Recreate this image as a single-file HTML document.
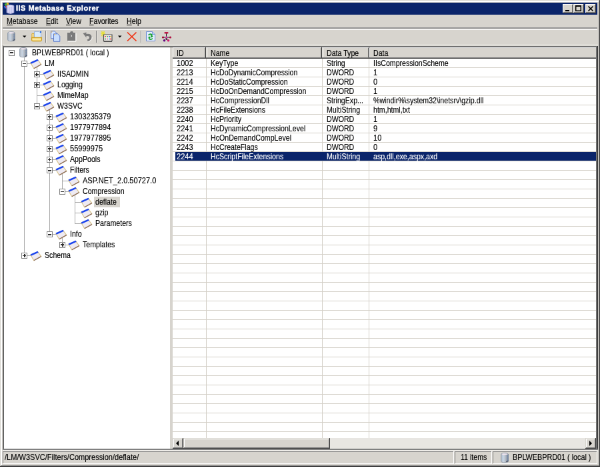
<!DOCTYPE html>
<html><head><meta charset="utf-8"><style>
html,body{margin:0;padding:0;width:600px;height:467px;overflow:hidden;background:#D4D0C8}
#w{position:absolute;left:0;top:0;width:900px;height:700px;transform:scale(0.666667);transform-origin:0 0;will-change:transform;overflow:hidden;font-family:'Liberation Sans', sans-serif}
u{text-decoration:underline}
</style></head><body><div id="w">
<div style="position:absolute;left:0px;top:0px;width:900px;height:700px;background:#D7D4CE;"></div>
<div style="position:absolute;left:0px;top:0px;width:900px;height:1px;background:#D7D4CE;"></div>
<div style="position:absolute;left:0px;top:0px;width:1px;height:700px;background:#D7D4CE;"></div>
<div style="position:absolute;left:1px;top:1px;width:898px;height:2px;background:#FFFFFF;"></div>
<div style="position:absolute;left:1px;top:1px;width:2px;height:698px;background:#FFFFFF;"></div>
<div style="position:absolute;left:0px;top:699px;width:900px;height:1px;background:#404040;"></div>
<div style="position:absolute;left:899px;top:0px;width:1px;height:700px;background:#404040;"></div>
<div style="position:absolute;left:1px;top:698px;width:898px;height:1px;background:#808080;"></div>
<div style="position:absolute;left:898px;top:1px;width:1px;height:698px;background:#808080;"></div>
<div style="position:absolute;left:4px;top:4px;width:892px;height:18px;background:#0A246A;"></div>
<div style="position:absolute;left:24px;top:6.01px;height:13px;line-height:13px;white-space:nowrap;font:bold 11px 'Liberation Sans', sans-serif;color:#FFF;letter-spacing:0.5px;-webkit-text-stroke:0.15px #FFF;transform:scaleX(1);transform-origin:0 0;-webkit-text-stroke:0.4px #FFF">IIS Metabase Explorer</div>
<svg style="position:absolute;left:5px;top:4px" width="18" height="18" viewBox="0 0 18 18">
<path d="M1.5 2 L4.5 0.5 L6 3.5 L3 5Z" fill="#40B040"/><path d="M4.5 0.5 L7.5 0 L8.5 3 L6 3.5Z" fill="#F0C020"/><path d="M1 5 L3 5 L4.5 8.5 L2 8.5Z" fill="#3070F0"/><path d="M3 5 L6 3.5 L7.5 7 L4.5 8.5Z" fill="#E03020"/>
<path d="M5 4.5 Q10.5 2 16 4.5 L16 15 Q10.5 18 5 15Z" fill="#C4C4EC" stroke="#9090C8" stroke-width="0.8"/>
<path d="M5.5 5 Q10.5 3 15.5 5 Q10.5 7 5.5 5Z" fill="#E8E8FF"/>
<path d="M8 6 L8 15.5 M11 6.5 L11 16.5 M14 6 L14 15.5" stroke="#E4E4FF" stroke-width="1"/>
</svg>
<div style="position:absolute;left:844px;top:6px;width:16px;height:14px;background:#D7D4CE;"></div>
<div style="position:absolute;left:844px;top:6px;width:15px;height:1px;background:#FFFFFF;"></div>
<div style="position:absolute;left:844px;top:6px;width:1px;height:13px;background:#FFFFFF;"></div>
<div style="position:absolute;left:844px;top:19px;width:16px;height:1px;background:#404040;"></div>
<div style="position:absolute;left:859px;top:6px;width:1px;height:14px;background:#404040;"></div>
<div style="position:absolute;left:845px;top:18px;width:14px;height:1px;background:#808080;"></div>
<div style="position:absolute;left:858px;top:7px;width:1px;height:12px;background:#808080;"></div>
<div style="position:absolute;left:848px;top:15px;width:6px;height:2px;background:#000;"></div>
<div style="position:absolute;left:860px;top:6px;width:16px;height:14px;background:#D7D4CE;"></div>
<div style="position:absolute;left:860px;top:6px;width:15px;height:1px;background:#FFFFFF;"></div>
<div style="position:absolute;left:860px;top:6px;width:1px;height:13px;background:#FFFFFF;"></div>
<div style="position:absolute;left:860px;top:19px;width:16px;height:1px;background:#404040;"></div>
<div style="position:absolute;left:875px;top:6px;width:1px;height:14px;background:#404040;"></div>
<div style="position:absolute;left:861px;top:18px;width:14px;height:1px;background:#808080;"></div>
<div style="position:absolute;left:874px;top:7px;width:1px;height:12px;background:#808080;"></div>
<svg style="position:absolute;left:860px;top:6px" width="16" height="14"><path d="M3.7 3 L11.3 3 L11.3 10.3 L3.7 10.3Z" fill="none" stroke="#000" stroke-width="1.5"/><rect x="3" y="2" width="9" height="2" fill="#000"/></svg>
<div style="position:absolute;left:878px;top:6px;width:16px;height:14px;background:#D7D4CE;"></div>
<div style="position:absolute;left:878px;top:6px;width:15px;height:1px;background:#FFFFFF;"></div>
<div style="position:absolute;left:878px;top:6px;width:1px;height:13px;background:#FFFFFF;"></div>
<div style="position:absolute;left:878px;top:19px;width:16px;height:1px;background:#404040;"></div>
<div style="position:absolute;left:893px;top:6px;width:1px;height:14px;background:#404040;"></div>
<div style="position:absolute;left:879px;top:18px;width:14px;height:1px;background:#808080;"></div>
<div style="position:absolute;left:892px;top:7px;width:1px;height:12px;background:#808080;"></div>
<svg style="position:absolute;left:878px;top:6px" width="16" height="14"><path d="M4.5 3.5 L11.5 10.5 M11.5 3.5 L4.5 10.5" stroke="#000" stroke-width="1.6"/></svg>
<div style="position:absolute;left:10px;top:25.18px;height:13px;line-height:13px;white-space:nowrap;font:normal 12px 'Liberation Sans', sans-serif;color:#000;letter-spacing:0px;-webkit-text-stroke:0.15px #000;transform:scaleX(0.885);transform-origin:0 0;"><u>M</u>etabase</div>
<div style="position:absolute;left:69px;top:25.18px;height:13px;line-height:13px;white-space:nowrap;font:normal 12px 'Liberation Sans', sans-serif;color:#000;letter-spacing:0px;-webkit-text-stroke:0.15px #000;transform:scaleX(0.885);transform-origin:0 0;"><u>E</u>dit</div>
<div style="position:absolute;left:99px;top:25.18px;height:13px;line-height:13px;white-space:nowrap;font:normal 12px 'Liberation Sans', sans-serif;color:#000;letter-spacing:0px;-webkit-text-stroke:0.15px #000;transform:scaleX(0.885);transform-origin:0 0;"><u>V</u>iew</div>
<div style="position:absolute;left:134px;top:25.18px;height:13px;line-height:13px;white-space:nowrap;font:normal 12px 'Liberation Sans', sans-serif;color:#000;letter-spacing:0px;-webkit-text-stroke:0.15px #000;transform:scaleX(0.885);transform-origin:0 0;"><u>F</u>avorites</div>
<div style="position:absolute;left:190px;top:25.18px;height:13px;line-height:13px;white-space:nowrap;font:normal 12px 'Liberation Sans', sans-serif;color:#000;letter-spacing:0px;-webkit-text-stroke:0.15px #000;transform:scaleX(0.885);transform-origin:0 0;"><u>H</u>elp</div>
<div style="position:absolute;left:4px;top:41.3px;width:892px;height:1.4px;background:#989898;"></div>
<div style="position:absolute;left:4px;top:44px;width:892px;height:1px;background:#FFFFFF;"></div>
<svg style="position:absolute;left:9px;top:46px" width="16" height="17" viewBox="0 0 16 17"><defs><linearGradient id="sg9_46" x1="0" x2="1"><stop offset="0" stop-color="#A8B0BA"/><stop offset="0.35" stop-color="#D4D8DE"/><stop offset="0.7" stop-color="#A8B0BA"/><stop offset="1" stop-color="#747E8E"/></linearGradient></defs>
<path d="M2.5 4 Q2.5 1.5 8 1.5 Q13.5 1.5 13.5 4 L13.5 13.5 Q13.5 15.8 8 15.8 Q2.5 15.8 2.5 13.5Z" fill="url(#sg9_46)" stroke="#8C98A8" stroke-width="0.8"/>
<path d="M3.5 3.6 Q4 2.2 8 2.2 Q12.5 2.2 12.8 3.6 Q8 5 3.5 3.6Z" fill="#F2E6F2"/>
<path d="M4.5 5 L4.5 14 M7 5.2 L7 14.8" stroke="#B4CCE6" stroke-width="0.8"/>
<path d="M12 5.5 L12 6.5 M12 8.5 L12 9.5 M12 11.5 L12 12.5" stroke="#4A7CC4" stroke-width="1"/>
<path d="M10 14.5 Q12.5 14.5 13.2 13" stroke="#505868" stroke-width="1.2" fill="none"/></svg>
<svg style="position:absolute;left:34px;top:53px" width="6" height="4" viewBox="0 0 6 4"><path d="M0 0.5 L5.5 0.5 L2.75 3.5Z" fill="#000"/></svg>
<svg style="position:absolute;left:46px;top:46px" width="18" height="17" viewBox="0 0 18 17"><path d="M2 6 Q1.5 4.5 3 4.5 L5 4.5 L5 11 L2 11Z" fill="#FFF4C8" stroke="#D8A828" stroke-width="1.2"/><path d="M5.5 1.5 L13 1.5 L15.5 4 L15.5 12 L5.5 12Z" fill="#D8ECFF" stroke="#88A8D8" stroke-width="0.8"/><circle cx="15" cy="2" r="1.2" fill="#2068E0"/><path d="M1.6 10.5 L16.4 10.5 L16.4 14 Q16.4 15.5 15 15.5 L3 15.5 Q1.6 15.5 1.6 14Z" fill="#FCE9A0" stroke="#D0A020" stroke-width="1.3"/></svg>
<div style="position:absolute;left:68px;top:46px;width:1px;height:18px;background:#808080;"></div>
<div style="position:absolute;left:69px;top:46px;width:1px;height:18px;background:#F0EEEA;"></div>
<svg style="position:absolute;left:75px;top:46px" width="17" height="17" viewBox="0 0 17 17"><path d="M1.5 0.8 L7 0.8 L9.8 3.6 L9.8 11.8 L1.5 11.8Z" fill="#D6E6FF" stroke="#5A78C8" stroke-width="1"/><path d="M1.8 1.2 L4 1.2 L1.8 3.5Z" fill="#F0C060"/><path d="M5.5 4.8 L11.5 4.8 L14.8 8 L14.8 16.3 L5.5 16.3Z" fill="#C8DEFF" stroke="#5A78C8" stroke-width="1"/><path d="M6 5.2 L8.5 5.2 L6 7.5Z" fill="#F0C060"/></svg>
<svg style="position:absolute;left:99px;top:46px" width="17" height="17" viewBox="0 0 17 17"><path d="M2 3 L6 3 L7 1 L10 1 L11 3 L14 3 L14 15 L2 15Z" fill="#7A7A7A"/><path d="M3 16 L15 16 L15 4" fill="none" stroke="#FFFFFF" stroke-width="1"/><path d="M7 6 L9 8 L7.5 9" fill="none" stroke="#F0F0F0" stroke-width="0.9"/></svg>
<svg style="position:absolute;left:123px;top:47px" width="17" height="16" viewBox="0 0 17 16"><path d="M1.5 3 L6.5 1.5 L6.5 4 Q14.5 3 14.5 9 Q14.5 13 9 15 L7.5 12.5 Q11 11.5 11 9 Q11 6.5 6.5 7 L6.5 9.5Z" fill="#7A7A7A"/><path d="M9.5 15.5 Q15.5 13 15.2 9" fill="none" stroke="#FFFFFF" stroke-width="0.9"/></svg>
<div style="position:absolute;left:144px;top:46px;width:1px;height:18px;background:#808080;"></div>
<div style="position:absolute;left:145px;top:46px;width:1px;height:18px;background:#F0EEEA;"></div>
<svg style="position:absolute;left:150px;top:46px" width="20" height="18" viewBox="0 0 20 18"><path d="M2 1 L7 8 M7 1 L2 8 M4.5 0 L4.5 9 M1 4.5 L8 4.5" stroke="#E8E040" stroke-width="1.3"/><path d="M5.5 6 L18 6 L18 15.5 L5.5 15.5Z" fill="#F4F2EC" stroke="#505050" stroke-width="1.2"/><path d="M5.5 16 L18 16" stroke="#404040" stroke-width="1.6"/><circle cx="8" cy="9" r="0.9" fill="#E02020"/><circle cx="11" cy="9" r="0.9" fill="#20A040"/><circle cx="14" cy="9" r="0.9" fill="#2040E0"/><circle cx="8" cy="12.5" r="0.9" fill="#20A040"/><circle cx="11" cy="12.5" r="0.9" fill="#E040A0"/><circle cx="14" cy="12.5" r="0.9" fill="#20B0E0"/><circle cx="16" cy="9" r="0.9" fill="#E0A020"/><circle cx="16" cy="12.5" r="0.9" fill="#E02020"/></svg>
<svg style="position:absolute;left:177px;top:53px" width="6" height="4" viewBox="0 0 6 4"><path d="M0 0.5 L5.5 0.5 L2.75 3.5Z" fill="#000"/></svg>
<svg style="position:absolute;left:189px;top:47px" width="17" height="16" viewBox="0 0 17 16"><path d="M2 1.5 L15.5 14.5 M15.5 1.5 L2 14.5" stroke="#F03010" stroke-width="1.7"/></svg>
<div style="position:absolute;left:211px;top:46px;width:1px;height:18px;background:#808080;"></div>
<div style="position:absolute;left:212px;top:46px;width:1px;height:18px;background:#F0EEEA;"></div>
<svg style="position:absolute;left:218px;top:46px" width="16" height="17" viewBox="0 0 16 17"><path d="M1.5 1.5 L10.5 1.5 L14.5 5.5 L14.5 15.5 L1.5 15.5Z" fill="#E4EEFF" stroke="#6A8AD0" stroke-width="1"/><path d="M10.5 1.5 L10.5 5.5 L14.5 5.5" fill="#B8D0F0" stroke="#6A8AD0" stroke-width="0.8"/><path d="M4 6 Q6 3.8 9 4.5 Q11.5 5.5 10.5 8 L12 8.5 L9 10.5 L7.5 7.5 L9 7.8 Q9 6.5 7.5 6.3 Q6 6.2 5.5 7.5Z" fill="#18A030"/><path d="M11.5 12 Q9.5 14.5 6.5 13.8 Q4 13 5 10.5 L3.5 10 L6.5 8.5 L8 11.2 L6.5 11 Q6.5 12.2 8 12.3 Q9.5 12.5 10 11Z" fill="#18A030"/></svg>
<svg style="position:absolute;left:241px;top:46px" width="18" height="18" viewBox="0 0 18 18"><path d="M8.5 4 L8.5 14 M3.5 10 L14.5 10 M8.5 11 L5.5 14.5 M8.5 11 L11.5 14.5" stroke="#202020" stroke-width="1" fill="none"/><rect x="5.5" y="2" width="6" height="2.6" rx="1" fill="#C01848"/><circle cx="3.5" cy="10" r="1.6" fill="#A00830"/><circle cx="14.5" cy="10" r="1.6" fill="#B01040"/><circle cx="8.5" cy="10" r="1.5" fill="#F030B0"/><circle cx="5.5" cy="14.8" r="1.8" fill="#600880"/><circle cx="11.5" cy="14.8" r="1.8" fill="#D01870"/></svg>
<div style="position:absolute;left:4px;top:68px;width:893px;height:607px;background:#D7D4CE;"></div>
<div style="position:absolute;left:6px;top:71px;width:249px;height:602px;background:#FFFFFF;"></div>
<div style="position:absolute;left:4px;top:67px;width:893px;height:1px;background:#F4F2EE;"></div>
<div style="position:absolute;left:4px;top:69px;width:893px;height:1px;background:#808080;"></div>
<div style="position:absolute;left:4px;top:70px;width:893px;height:1px;background:#404040;"></div>
<div style="position:absolute;left:4px;top:68px;width:1px;height:607px;background:#808080;"></div>
<div style="position:absolute;left:5px;top:69px;width:1px;height:605px;background:#5A5A5A;"></div>
<div style="position:absolute;left:894px;top:69px;width:1px;height:605px;background:#808080;"></div>
<div style="position:absolute;left:895px;top:69px;width:2px;height:606px;background:#404040;"></div>
<div style="position:absolute;left:4px;top:673px;width:893px;height:2px;background:#808080;"></div>
<div style="position:absolute;left:4px;top:675px;width:893px;height:2px;background:#EEECE8;"></div>
<div style="position:absolute;left:36px;top:79px;width:0;height:304px;border-left:1px solid #A8A8A8"></div>
<div style="position:absolute;left:55px;top:95px;width:0;height:64px;border-left:1px solid #A8A8A8"></div>
<div style="position:absolute;left:74px;top:159px;width:0;height:192px;border-left:1px solid #A8A8A8"></div>
<div style="position:absolute;left:93px;top:255px;width:0;height:32px;border-left:1px solid #A8A8A8"></div>
<div style="position:absolute;left:112px;top:287px;width:0;height:48px;border-left:1px solid #A8A8A8"></div>
<div style="position:absolute;left:93px;top:351px;width:0;height:16px;border-left:1px solid #A8A8A8"></div>
<div style="position:absolute;left:12.5px;top:75px;width:9px;height:9px;background:#FFFFFF;border:1px solid #808080;box-sizing:border-box"></div>
<div style="position:absolute;left:14.5px;top:78.0px;width:5px;height:1.5px;background:#303030;"></div>
<svg style="position:absolute;left:27px;top:70px" width="16" height="17" viewBox="0 0 16 17"><defs><linearGradient id="sg27_70" x1="0" x2="1"><stop offset="0" stop-color="#A8B0BA"/><stop offset="0.35" stop-color="#D4D8DE"/><stop offset="0.7" stop-color="#A8B0BA"/><stop offset="1" stop-color="#747E8E"/></linearGradient></defs>
<path d="M2.5 4 Q2.5 1.5 8 1.5 Q13.5 1.5 13.5 4 L13.5 13.5 Q13.5 15.8 8 15.8 Q2.5 15.8 2.5 13.5Z" fill="url(#sg27_70)" stroke="#8C98A8" stroke-width="0.8"/>
<path d="M3.5 3.6 Q4 2.2 8 2.2 Q12.5 2.2 12.8 3.6 Q8 5 3.5 3.6Z" fill="#F2E6F2"/>
<path d="M4.5 5 L4.5 14 M7 5.2 L7 14.8" stroke="#B4CCE6" stroke-width="0.8"/>
<path d="M12 5.5 L12 6.5 M12 8.5 L12 9.5 M12 11.5 L12 12.5" stroke="#4A7CC4" stroke-width="1"/>
<path d="M10 14.5 Q12.5 14.5 13.2 13" stroke="#505868" stroke-width="1.2" fill="none"/></svg>
<div style="position:absolute;left:48px;top:71.98px;height:13px;line-height:13px;white-space:nowrap;font:normal 12px 'Liberation Sans', sans-serif;color:#000;letter-spacing:0px;-webkit-text-stroke:0.15px #000;transform:scaleX(0.885);transform-origin:0 0;">BPLWEBPRD01 ( local )</div>
<div style="position:absolute;left:36px;top:95px;width:10px;height:0;border-top:1px solid #A8A8A8"></div>
<div style="position:absolute;left:31.5px;top:91px;width:9px;height:9px;background:#FFFFFF;border:1px solid #808080;box-sizing:border-box"></div>
<div style="position:absolute;left:33.5px;top:94.5px;width:5px;height:1.5px;background:#303030;"></div>
<svg style="position:absolute;left:45px;top:87px" width="18" height="17" viewBox="0 0 18 17"><path d="M0.8 7.2 L11.6 2.6 L16.8 9.6 L5.8 15.8Z" fill="#EEEAF2" stroke="#D8C488" stroke-width="1.1"/><path d="M5.8 15.8 L16.8 9.6" stroke="#8A6A58" stroke-width="1.3"/><path d="M0.6 6.6 L11.4 1.8 L12.8 3.8 L1.8 8.8Z" fill="#1A44EE"/></svg>
<div style="position:absolute;left:67px;top:87.98px;height:13px;line-height:13px;white-space:nowrap;font:normal 12px 'Liberation Sans', sans-serif;color:#000;letter-spacing:0px;-webkit-text-stroke:0.15px #000;transform:scaleX(0.885);transform-origin:0 0;">LM</div>
<div style="position:absolute;left:55px;top:111px;width:10px;height:0;border-top:1px solid #A8A8A8"></div>
<div style="position:absolute;left:50.5px;top:107px;width:9px;height:9px;background:#FFFFFF;border:1px solid #808080;box-sizing:border-box"></div>
<div style="position:absolute;left:52.5px;top:111.0px;width:5px;height:1.5px;background:#303030;"></div>
<div style="position:absolute;left:54.0px;top:108.5px;width:1.5px;height:5px;background:#303030;"></div>
<svg style="position:absolute;left:64px;top:103px" width="18" height="17" viewBox="0 0 18 17"><path d="M0.8 7.2 L11.6 2.6 L16.8 9.6 L5.8 15.8Z" fill="#EEEAF2" stroke="#D8C488" stroke-width="1.1"/><path d="M5.8 15.8 L16.8 9.6" stroke="#8A6A58" stroke-width="1.3"/><path d="M0.6 6.6 L11.4 1.8 L12.8 3.8 L1.8 8.8Z" fill="#1A44EE"/></svg>
<div style="position:absolute;left:86px;top:103.98px;height:13px;line-height:13px;white-space:nowrap;font:normal 12px 'Liberation Sans', sans-serif;color:#000;letter-spacing:0px;-webkit-text-stroke:0.15px #000;transform:scaleX(0.885);transform-origin:0 0;">IISADMIN</div>
<div style="position:absolute;left:55px;top:127px;width:10px;height:0;border-top:1px solid #A8A8A8"></div>
<div style="position:absolute;left:50.5px;top:123px;width:9px;height:9px;background:#FFFFFF;border:1px solid #808080;box-sizing:border-box"></div>
<div style="position:absolute;left:52.5px;top:126.0px;width:5px;height:1.5px;background:#303030;"></div>
<div style="position:absolute;left:54.0px;top:124.5px;width:1.5px;height:5px;background:#303030;"></div>
<svg style="position:absolute;left:64px;top:119px" width="18" height="17" viewBox="0 0 18 17"><path d="M0.8 7.2 L11.6 2.6 L16.8 9.6 L5.8 15.8Z" fill="#EEEAF2" stroke="#D8C488" stroke-width="1.1"/><path d="M5.8 15.8 L16.8 9.6" stroke="#8A6A58" stroke-width="1.3"/><path d="M0.6 6.6 L11.4 1.8 L12.8 3.8 L1.8 8.8Z" fill="#1A44EE"/></svg>
<div style="position:absolute;left:86px;top:119.98px;height:13px;line-height:13px;white-space:nowrap;font:normal 12px 'Liberation Sans', sans-serif;color:#000;letter-spacing:0px;-webkit-text-stroke:0.15px #000;transform:scaleX(0.885);transform-origin:0 0;">Logging</div>
<div style="position:absolute;left:55px;top:143px;width:10px;height:0;border-top:1px solid #A8A8A8"></div>
<svg style="position:absolute;left:64px;top:135px" width="18" height="17" viewBox="0 0 18 17"><path d="M0.8 7.2 L11.6 2.6 L16.8 9.6 L5.8 15.8Z" fill="#EEEAF2" stroke="#D8C488" stroke-width="1.1"/><path d="M5.8 15.8 L16.8 9.6" stroke="#8A6A58" stroke-width="1.3"/><path d="M0.6 6.6 L11.4 1.8 L12.8 3.8 L1.8 8.8Z" fill="#1A44EE"/></svg>
<div style="position:absolute;left:86px;top:135.98px;height:13px;line-height:13px;white-space:nowrap;font:normal 12px 'Liberation Sans', sans-serif;color:#000;letter-spacing:0px;-webkit-text-stroke:0.15px #000;transform:scaleX(0.885);transform-origin:0 0;">MimeMap</div>
<div style="position:absolute;left:55px;top:159px;width:10px;height:0;border-top:1px solid #A8A8A8"></div>
<div style="position:absolute;left:50.5px;top:155px;width:9px;height:9px;background:#FFFFFF;border:1px solid #808080;box-sizing:border-box"></div>
<div style="position:absolute;left:52.5px;top:159.0px;width:5px;height:1.5px;background:#303030;"></div>
<svg style="position:absolute;left:64px;top:151px" width="18" height="17" viewBox="0 0 18 17"><path d="M0.8 7.2 L11.6 2.6 L16.8 9.6 L5.8 15.8Z" fill="#EEEAF2" stroke="#D8C488" stroke-width="1.1"/><path d="M5.8 15.8 L16.8 9.6" stroke="#8A6A58" stroke-width="1.3"/><path d="M0.6 6.6 L11.4 1.8 L12.8 3.8 L1.8 8.8Z" fill="#1A44EE"/></svg>
<div style="position:absolute;left:86px;top:151.98px;height:13px;line-height:13px;white-space:nowrap;font:normal 12px 'Liberation Sans', sans-serif;color:#000;letter-spacing:0px;-webkit-text-stroke:0.15px #000;transform:scaleX(0.885);transform-origin:0 0;">W3SVC</div>
<div style="position:absolute;left:74px;top:175px;width:10px;height:0;border-top:1px solid #A8A8A8"></div>
<div style="position:absolute;left:69.5px;top:171px;width:9px;height:9px;background:#FFFFFF;border:1px solid #808080;box-sizing:border-box"></div>
<div style="position:absolute;left:71.5px;top:174.0px;width:5px;height:1.5px;background:#303030;"></div>
<div style="position:absolute;left:73.5px;top:172.5px;width:1.5px;height:5px;background:#303030;"></div>
<svg style="position:absolute;left:83px;top:167px" width="18" height="17" viewBox="0 0 18 17"><path d="M0.8 7.2 L11.6 2.6 L16.8 9.6 L5.8 15.8Z" fill="#EEEAF2" stroke="#D8C488" stroke-width="1.1"/><path d="M5.8 15.8 L16.8 9.6" stroke="#8A6A58" stroke-width="1.3"/><path d="M0.6 6.6 L11.4 1.8 L12.8 3.8 L1.8 8.8Z" fill="#1A44EE"/></svg>
<div style="position:absolute;left:105px;top:167.98px;height:13px;line-height:13px;white-space:nowrap;font:normal 12px 'Liberation Sans', sans-serif;color:#000;letter-spacing:0px;-webkit-text-stroke:0.15px #000;transform:scaleX(0.92);transform-origin:0 0;">1303235379</div>
<div style="position:absolute;left:74px;top:191px;width:10px;height:0;border-top:1px solid #A8A8A8"></div>
<div style="position:absolute;left:69.5px;top:187px;width:9px;height:9px;background:#FFFFFF;border:1px solid #808080;box-sizing:border-box"></div>
<div style="position:absolute;left:71.5px;top:190.5px;width:5px;height:1.5px;background:#303030;"></div>
<div style="position:absolute;left:73.5px;top:188.5px;width:1.5px;height:5px;background:#303030;"></div>
<svg style="position:absolute;left:83px;top:183px" width="18" height="17" viewBox="0 0 18 17"><path d="M0.8 7.2 L11.6 2.6 L16.8 9.6 L5.8 15.8Z" fill="#EEEAF2" stroke="#D8C488" stroke-width="1.1"/><path d="M5.8 15.8 L16.8 9.6" stroke="#8A6A58" stroke-width="1.3"/><path d="M0.6 6.6 L11.4 1.8 L12.8 3.8 L1.8 8.8Z" fill="#1A44EE"/></svg>
<div style="position:absolute;left:105px;top:183.98px;height:13px;line-height:13px;white-space:nowrap;font:normal 12px 'Liberation Sans', sans-serif;color:#000;letter-spacing:0px;-webkit-text-stroke:0.15px #000;transform:scaleX(0.92);transform-origin:0 0;">1977977894</div>
<div style="position:absolute;left:74px;top:207px;width:10px;height:0;border-top:1px solid #A8A8A8"></div>
<div style="position:absolute;left:69.5px;top:203px;width:9px;height:9px;background:#FFFFFF;border:1px solid #808080;box-sizing:border-box"></div>
<div style="position:absolute;left:71.5px;top:207.0px;width:5px;height:1.5px;background:#303030;"></div>
<div style="position:absolute;left:73.5px;top:204.5px;width:1.5px;height:5px;background:#303030;"></div>
<svg style="position:absolute;left:83px;top:199px" width="18" height="17" viewBox="0 0 18 17"><path d="M0.8 7.2 L11.6 2.6 L16.8 9.6 L5.8 15.8Z" fill="#EEEAF2" stroke="#D8C488" stroke-width="1.1"/><path d="M5.8 15.8 L16.8 9.6" stroke="#8A6A58" stroke-width="1.3"/><path d="M0.6 6.6 L11.4 1.8 L12.8 3.8 L1.8 8.8Z" fill="#1A44EE"/></svg>
<div style="position:absolute;left:105px;top:199.98px;height:13px;line-height:13px;white-space:nowrap;font:normal 12px 'Liberation Sans', sans-serif;color:#000;letter-spacing:0px;-webkit-text-stroke:0.15px #000;transform:scaleX(0.92);transform-origin:0 0;">1977977895</div>
<div style="position:absolute;left:74px;top:223px;width:10px;height:0;border-top:1px solid #A8A8A8"></div>
<div style="position:absolute;left:69.5px;top:219px;width:9px;height:9px;background:#FFFFFF;border:1px solid #808080;box-sizing:border-box"></div>
<div style="position:absolute;left:71.5px;top:222.0px;width:5px;height:1.5px;background:#303030;"></div>
<div style="position:absolute;left:73.5px;top:220.5px;width:1.5px;height:5px;background:#303030;"></div>
<svg style="position:absolute;left:83px;top:215px" width="18" height="17" viewBox="0 0 18 17"><path d="M0.8 7.2 L11.6 2.6 L16.8 9.6 L5.8 15.8Z" fill="#EEEAF2" stroke="#D8C488" stroke-width="1.1"/><path d="M5.8 15.8 L16.8 9.6" stroke="#8A6A58" stroke-width="1.3"/><path d="M0.6 6.6 L11.4 1.8 L12.8 3.8 L1.8 8.8Z" fill="#1A44EE"/></svg>
<div style="position:absolute;left:105px;top:215.98px;height:13px;line-height:13px;white-space:nowrap;font:normal 12px 'Liberation Sans', sans-serif;color:#000;letter-spacing:0px;-webkit-text-stroke:0.15px #000;transform:scaleX(0.92);transform-origin:0 0;">55999975</div>
<div style="position:absolute;left:74px;top:239px;width:10px;height:0;border-top:1px solid #A8A8A8"></div>
<div style="position:absolute;left:69.5px;top:235px;width:9px;height:9px;background:#FFFFFF;border:1px solid #808080;box-sizing:border-box"></div>
<div style="position:absolute;left:71.5px;top:238.5px;width:5px;height:1.5px;background:#303030;"></div>
<div style="position:absolute;left:73.5px;top:236.5px;width:1.5px;height:5px;background:#303030;"></div>
<svg style="position:absolute;left:83px;top:231px" width="18" height="17" viewBox="0 0 18 17"><path d="M0.8 7.2 L11.6 2.6 L16.8 9.6 L5.8 15.8Z" fill="#EEEAF2" stroke="#D8C488" stroke-width="1.1"/><path d="M5.8 15.8 L16.8 9.6" stroke="#8A6A58" stroke-width="1.3"/><path d="M0.6 6.6 L11.4 1.8 L12.8 3.8 L1.8 8.8Z" fill="#1A44EE"/></svg>
<div style="position:absolute;left:105px;top:231.98px;height:13px;line-height:13px;white-space:nowrap;font:normal 12px 'Liberation Sans', sans-serif;color:#000;letter-spacing:0px;-webkit-text-stroke:0.15px #000;transform:scaleX(0.885);transform-origin:0 0;">AppPools</div>
<div style="position:absolute;left:74px;top:255px;width:10px;height:0;border-top:1px solid #A8A8A8"></div>
<div style="position:absolute;left:69.5px;top:251px;width:9px;height:9px;background:#FFFFFF;border:1px solid #808080;box-sizing:border-box"></div>
<div style="position:absolute;left:71.5px;top:255.0px;width:5px;height:1.5px;background:#303030;"></div>
<svg style="position:absolute;left:83px;top:247px" width="18" height="17" viewBox="0 0 18 17"><path d="M0.8 7.2 L11.6 2.6 L16.8 9.6 L5.8 15.8Z" fill="#EEEAF2" stroke="#D8C488" stroke-width="1.1"/><path d="M5.8 15.8 L16.8 9.6" stroke="#8A6A58" stroke-width="1.3"/><path d="M0.6 6.6 L11.4 1.8 L12.8 3.8 L1.8 8.8Z" fill="#1A44EE"/></svg>
<div style="position:absolute;left:105px;top:247.98px;height:13px;line-height:13px;white-space:nowrap;font:normal 12px 'Liberation Sans', sans-serif;color:#000;letter-spacing:0px;-webkit-text-stroke:0.15px #000;transform:scaleX(0.885);transform-origin:0 0;">Filters</div>
<div style="position:absolute;left:93px;top:271px;width:10px;height:0;border-top:1px solid #A8A8A8"></div>
<svg style="position:absolute;left:102px;top:263px" width="18" height="17" viewBox="0 0 18 17"><path d="M0.8 7.2 L11.6 2.6 L16.8 9.6 L5.8 15.8Z" fill="#EEEAF2" stroke="#D8C488" stroke-width="1.1"/><path d="M5.8 15.8 L16.8 9.6" stroke="#8A6A58" stroke-width="1.3"/><path d="M0.6 6.6 L11.4 1.8 L12.8 3.8 L1.8 8.8Z" fill="#1A44EE"/></svg>
<div style="position:absolute;left:124px;top:263.98px;height:13px;line-height:13px;white-space:nowrap;font:normal 12px 'Liberation Sans', sans-serif;color:#000;letter-spacing:0px;-webkit-text-stroke:0.15px #000;transform:scaleX(0.92);transform-origin:0 0;">ASP.NET_2.0.50727.0</div>
<div style="position:absolute;left:93px;top:287px;width:10px;height:0;border-top:1px solid #A8A8A8"></div>
<div style="position:absolute;left:88.5px;top:283px;width:9px;height:9px;background:#FFFFFF;border:1px solid #808080;box-sizing:border-box"></div>
<div style="position:absolute;left:90.5px;top:286.5px;width:5px;height:1.5px;background:#303030;"></div>
<svg style="position:absolute;left:102px;top:279px" width="18" height="17" viewBox="0 0 18 17"><path d="M0.8 7.2 L11.6 2.6 L16.8 9.6 L5.8 15.8Z" fill="#EEEAF2" stroke="#D8C488" stroke-width="1.1"/><path d="M5.8 15.8 L16.8 9.6" stroke="#8A6A58" stroke-width="1.3"/><path d="M0.6 6.6 L11.4 1.8 L12.8 3.8 L1.8 8.8Z" fill="#1A44EE"/></svg>
<div style="position:absolute;left:124px;top:279.98px;height:13px;line-height:13px;white-space:nowrap;font:normal 12px 'Liberation Sans', sans-serif;color:#000;letter-spacing:0px;-webkit-text-stroke:0.15px #000;transform:scaleX(0.885);transform-origin:0 0;">Compression</div>
<div style="position:absolute;left:112px;top:303px;width:10px;height:0;border-top:1px solid #A8A8A8"></div>
<svg style="position:absolute;left:121px;top:295px" width="18" height="17" viewBox="0 0 18 17"><path d="M0.8 7.2 L11.6 2.6 L16.8 9.6 L5.8 15.8Z" fill="#EEEAF2" stroke="#D8C488" stroke-width="1.1"/><path d="M5.8 15.8 L16.8 9.6" stroke="#8A6A58" stroke-width="1.3"/><path d="M0.6 6.6 L11.4 1.8 L12.8 3.8 L1.8 8.8Z" fill="#1A44EE"/></svg>
<div style="position:absolute;left:141px;top:295px;width:39px;height:16px;background:#D7D4CE;"></div>
<div style="position:absolute;left:143px;top:295.98px;height:13px;line-height:13px;white-space:nowrap;font:normal 12px 'Liberation Sans', sans-serif;color:#000;letter-spacing:0px;-webkit-text-stroke:0.15px #000;transform:scaleX(0.885);transform-origin:0 0;">deflate</div>
<div style="position:absolute;left:112px;top:319px;width:10px;height:0;border-top:1px solid #A8A8A8"></div>
<svg style="position:absolute;left:121px;top:311px" width="18" height="17" viewBox="0 0 18 17"><path d="M0.8 7.2 L11.6 2.6 L16.8 9.6 L5.8 15.8Z" fill="#EEEAF2" stroke="#D8C488" stroke-width="1.1"/><path d="M5.8 15.8 L16.8 9.6" stroke="#8A6A58" stroke-width="1.3"/><path d="M0.6 6.6 L11.4 1.8 L12.8 3.8 L1.8 8.8Z" fill="#1A44EE"/></svg>
<div style="position:absolute;left:143px;top:311.98px;height:13px;line-height:13px;white-space:nowrap;font:normal 12px 'Liberation Sans', sans-serif;color:#000;letter-spacing:0px;-webkit-text-stroke:0.15px #000;transform:scaleX(0.885);transform-origin:0 0;">gzip</div>
<div style="position:absolute;left:112px;top:335px;width:10px;height:0;border-top:1px solid #A8A8A8"></div>
<svg style="position:absolute;left:121px;top:327px" width="18" height="17" viewBox="0 0 18 17"><path d="M0.8 7.2 L11.6 2.6 L16.8 9.6 L5.8 15.8Z" fill="#EEEAF2" stroke="#D8C488" stroke-width="1.1"/><path d="M5.8 15.8 L16.8 9.6" stroke="#8A6A58" stroke-width="1.3"/><path d="M0.6 6.6 L11.4 1.8 L12.8 3.8 L1.8 8.8Z" fill="#1A44EE"/></svg>
<div style="position:absolute;left:143px;top:327.98px;height:13px;line-height:13px;white-space:nowrap;font:normal 12px 'Liberation Sans', sans-serif;color:#000;letter-spacing:0px;-webkit-text-stroke:0.15px #000;transform:scaleX(0.885);transform-origin:0 0;">Parameters</div>
<div style="position:absolute;left:74px;top:351px;width:10px;height:0;border-top:1px solid #A8A8A8"></div>
<div style="position:absolute;left:69.5px;top:347px;width:9px;height:9px;background:#FFFFFF;border:1px solid #808080;box-sizing:border-box"></div>
<div style="position:absolute;left:71.5px;top:351.0px;width:5px;height:1.5px;background:#303030;"></div>
<svg style="position:absolute;left:83px;top:343px" width="18" height="17" viewBox="0 0 18 17"><path d="M0.8 7.2 L11.6 2.6 L16.8 9.6 L5.8 15.8Z" fill="#EEEAF2" stroke="#D8C488" stroke-width="1.1"/><path d="M5.8 15.8 L16.8 9.6" stroke="#8A6A58" stroke-width="1.3"/><path d="M0.6 6.6 L11.4 1.8 L12.8 3.8 L1.8 8.8Z" fill="#1A44EE"/></svg>
<div style="position:absolute;left:105px;top:343.98px;height:13px;line-height:13px;white-space:nowrap;font:normal 12px 'Liberation Sans', sans-serif;color:#000;letter-spacing:0px;-webkit-text-stroke:0.15px #000;transform:scaleX(0.885);transform-origin:0 0;">Info</div>
<div style="position:absolute;left:93px;top:367px;width:10px;height:0;border-top:1px solid #A8A8A8"></div>
<div style="position:absolute;left:88.5px;top:363px;width:9px;height:9px;background:#FFFFFF;border:1px solid #808080;box-sizing:border-box"></div>
<div style="position:absolute;left:90.5px;top:366.0px;width:5px;height:1.5px;background:#303030;"></div>
<div style="position:absolute;left:93.0px;top:364.5px;width:1.5px;height:5px;background:#303030;"></div>
<svg style="position:absolute;left:102px;top:359px" width="18" height="17" viewBox="0 0 18 17"><path d="M0.8 7.2 L11.6 2.6 L16.8 9.6 L5.8 15.8Z" fill="#EEEAF2" stroke="#D8C488" stroke-width="1.1"/><path d="M5.8 15.8 L16.8 9.6" stroke="#8A6A58" stroke-width="1.3"/><path d="M0.6 6.6 L11.4 1.8 L12.8 3.8 L1.8 8.8Z" fill="#1A44EE"/></svg>
<div style="position:absolute;left:124px;top:359.98px;height:13px;line-height:13px;white-space:nowrap;font:normal 12px 'Liberation Sans', sans-serif;color:#000;letter-spacing:0px;-webkit-text-stroke:0.15px #000;transform:scaleX(0.885);transform-origin:0 0;">Templates</div>
<div style="position:absolute;left:36px;top:383px;width:10px;height:0;border-top:1px solid #A8A8A8"></div>
<div style="position:absolute;left:31.5px;top:379px;width:9px;height:9px;background:#FFFFFF;border:1px solid #808080;box-sizing:border-box"></div>
<div style="position:absolute;left:33.5px;top:382.5px;width:5px;height:1.5px;background:#303030;"></div>
<div style="position:absolute;left:36.0px;top:380.5px;width:1.5px;height:5px;background:#303030;"></div>
<svg style="position:absolute;left:45px;top:375px" width="18" height="17" viewBox="0 0 18 17"><path d="M0.8 7.2 L11.6 2.6 L16.8 9.6 L5.8 15.8Z" fill="#EEEAF2" stroke="#D8C488" stroke-width="1.1"/><path d="M5.8 15.8 L16.8 9.6" stroke="#8A6A58" stroke-width="1.3"/><path d="M0.6 6.6 L11.4 1.8 L12.8 3.8 L1.8 8.8Z" fill="#1A44EE"/></svg>
<div style="position:absolute;left:67px;top:375.98px;height:13px;line-height:13px;white-space:nowrap;font:normal 12px 'Liberation Sans', sans-serif;color:#000;letter-spacing:0px;-webkit-text-stroke:0.15px #000;transform:scaleX(0.885);transform-origin:0 0;">Schema</div>
<div style="position:absolute;left:259px;top:71px;width:635px;height:602px;background:#FFFFFF;"></div>
<div style="position:absolute;left:259px;top:101px;width:635px;height:1px;background:#D4D0C8;"></div>
<div style="position:absolute;left:259px;top:115px;width:635px;height:1px;background:#D4D0C8;"></div>
<div style="position:absolute;left:259px;top:129px;width:635px;height:1px;background:#D4D0C8;"></div>
<div style="position:absolute;left:259px;top:143px;width:635px;height:1px;background:#D4D0C8;"></div>
<div style="position:absolute;left:259px;top:157px;width:635px;height:1px;background:#D4D0C8;"></div>
<div style="position:absolute;left:259px;top:171px;width:635px;height:1px;background:#D4D0C8;"></div>
<div style="position:absolute;left:259px;top:185px;width:635px;height:1px;background:#D4D0C8;"></div>
<div style="position:absolute;left:259px;top:199px;width:635px;height:1px;background:#D4D0C8;"></div>
<div style="position:absolute;left:259px;top:213px;width:635px;height:1px;background:#D4D0C8;"></div>
<div style="position:absolute;left:259px;top:227px;width:635px;height:1px;background:#D4D0C8;"></div>
<div style="position:absolute;left:259px;top:241px;width:635px;height:1px;background:#D4D0C8;"></div>
<div style="position:absolute;left:259px;top:255px;width:635px;height:1px;background:#D4D0C8;"></div>
<div style="position:absolute;left:259px;top:269px;width:635px;height:1px;background:#D4D0C8;"></div>
<div style="position:absolute;left:259px;top:283px;width:635px;height:1px;background:#D4D0C8;"></div>
<div style="position:absolute;left:259px;top:297px;width:635px;height:1px;background:#D4D0C8;"></div>
<div style="position:absolute;left:259px;top:311px;width:635px;height:1px;background:#D4D0C8;"></div>
<div style="position:absolute;left:259px;top:325px;width:635px;height:1px;background:#D4D0C8;"></div>
<div style="position:absolute;left:259px;top:339px;width:635px;height:1px;background:#D4D0C8;"></div>
<div style="position:absolute;left:259px;top:353px;width:635px;height:1px;background:#D4D0C8;"></div>
<div style="position:absolute;left:259px;top:367px;width:635px;height:1px;background:#D4D0C8;"></div>
<div style="position:absolute;left:259px;top:381px;width:635px;height:1px;background:#D4D0C8;"></div>
<div style="position:absolute;left:259px;top:395px;width:635px;height:1px;background:#D4D0C8;"></div>
<div style="position:absolute;left:259px;top:409px;width:635px;height:1px;background:#D4D0C8;"></div>
<div style="position:absolute;left:259px;top:423px;width:635px;height:1px;background:#D4D0C8;"></div>
<div style="position:absolute;left:259px;top:437px;width:635px;height:1px;background:#D4D0C8;"></div>
<div style="position:absolute;left:259px;top:451px;width:635px;height:1px;background:#D4D0C8;"></div>
<div style="position:absolute;left:259px;top:465px;width:635px;height:1px;background:#D4D0C8;"></div>
<div style="position:absolute;left:259px;top:479px;width:635px;height:1px;background:#D4D0C8;"></div>
<div style="position:absolute;left:259px;top:493px;width:635px;height:1px;background:#D4D0C8;"></div>
<div style="position:absolute;left:259px;top:507px;width:635px;height:1px;background:#D4D0C8;"></div>
<div style="position:absolute;left:259px;top:521px;width:635px;height:1px;background:#D4D0C8;"></div>
<div style="position:absolute;left:259px;top:535px;width:635px;height:1px;background:#D4D0C8;"></div>
<div style="position:absolute;left:259px;top:549px;width:635px;height:1px;background:#D4D0C8;"></div>
<div style="position:absolute;left:259px;top:563px;width:635px;height:1px;background:#D4D0C8;"></div>
<div style="position:absolute;left:259px;top:577px;width:635px;height:1px;background:#D4D0C8;"></div>
<div style="position:absolute;left:259px;top:591px;width:635px;height:1px;background:#D4D0C8;"></div>
<div style="position:absolute;left:259px;top:605px;width:635px;height:1px;background:#D4D0C8;"></div>
<div style="position:absolute;left:259px;top:619px;width:635px;height:1px;background:#D4D0C8;"></div>
<div style="position:absolute;left:259px;top:633px;width:635px;height:1px;background:#D4D0C8;"></div>
<div style="position:absolute;left:259px;top:647px;width:635px;height:1px;background:#D4D0C8;"></div>
<div style="position:absolute;left:309px;top:88px;width:1px;height:569px;background:#D4D0C8;"></div>
<div style="position:absolute;left:483px;top:88px;width:1px;height:569px;background:#D4D0C8;"></div>
<div style="position:absolute;left:553px;top:88px;width:1px;height:569px;background:#D4D0C8;"></div>
<div style="position:absolute;left:259px;top:71px;width:51px;height:17px;background:#D7D4CE;"></div>
<div style="position:absolute;left:259px;top:71px;width:51px;height:1px;background:#FFFFFF;"></div>
<div style="position:absolute;left:259px;top:71px;width:1px;height:17px;background:#FFFFFF;"></div>
<div style="position:absolute;left:259px;top:87px;width:51px;height:1px;background:#404040;"></div>
<div style="position:absolute;left:259px;top:86px;width:51px;height:1px;background:#808080;"></div>
<div style="position:absolute;left:308px;top:71px;width:1px;height:17px;background:#404040;"></div>
<div style="position:absolute;left:307px;top:72px;width:1px;height:15px;background:#808080;"></div>
<div style="position:absolute;left:264.6px;top:73.18px;height:13px;line-height:13px;white-space:nowrap;font:normal 12px 'Liberation Sans', sans-serif;color:#000;letter-spacing:0px;-webkit-text-stroke:0.15px #000;transform:scaleX(0.885);transform-origin:0 0;">ID</div>
<div style="position:absolute;left:310px;top:71px;width:174px;height:17px;background:#D7D4CE;"></div>
<div style="position:absolute;left:310px;top:71px;width:174px;height:1px;background:#FFFFFF;"></div>
<div style="position:absolute;left:310px;top:71px;width:1px;height:17px;background:#FFFFFF;"></div>
<div style="position:absolute;left:310px;top:87px;width:174px;height:1px;background:#404040;"></div>
<div style="position:absolute;left:310px;top:86px;width:174px;height:1px;background:#808080;"></div>
<div style="position:absolute;left:482px;top:71px;width:1px;height:17px;background:#404040;"></div>
<div style="position:absolute;left:481px;top:72px;width:1px;height:15px;background:#808080;"></div>
<div style="position:absolute;left:315.6px;top:73.18px;height:13px;line-height:13px;white-space:nowrap;font:normal 12px 'Liberation Sans', sans-serif;color:#000;letter-spacing:0px;-webkit-text-stroke:0.15px #000;transform:scaleX(0.885);transform-origin:0 0;">Name</div>
<div style="position:absolute;left:484px;top:71px;width:70px;height:17px;background:#D7D4CE;"></div>
<div style="position:absolute;left:484px;top:71px;width:70px;height:1px;background:#FFFFFF;"></div>
<div style="position:absolute;left:484px;top:71px;width:1px;height:17px;background:#FFFFFF;"></div>
<div style="position:absolute;left:484px;top:87px;width:70px;height:1px;background:#404040;"></div>
<div style="position:absolute;left:484px;top:86px;width:70px;height:1px;background:#808080;"></div>
<div style="position:absolute;left:553px;top:71px;width:1px;height:17px;background:#404040;"></div>
<div style="position:absolute;left:552px;top:72px;width:1px;height:15px;background:#808080;"></div>
<div style="position:absolute;left:489.6px;top:73.18px;height:13px;line-height:13px;white-space:nowrap;font:normal 12px 'Liberation Sans', sans-serif;color:#000;letter-spacing:0px;-webkit-text-stroke:0.15px #000;transform:scaleX(0.885);transform-origin:0 0;">Data Type</div>
<div style="position:absolute;left:554px;top:71px;width:340px;height:17px;background:#D7D4CE;"></div>
<div style="position:absolute;left:554px;top:71px;width:340px;height:1px;background:#FFFFFF;"></div>
<div style="position:absolute;left:554px;top:71px;width:1px;height:17px;background:#FFFFFF;"></div>
<div style="position:absolute;left:554px;top:87px;width:340px;height:1px;background:#404040;"></div>
<div style="position:absolute;left:554px;top:86px;width:340px;height:1px;background:#808080;"></div>
<div style="position:absolute;left:559.6px;top:73.18px;height:13px;line-height:13px;white-space:nowrap;font:normal 12px 'Liberation Sans', sans-serif;color:#000;letter-spacing:0px;-webkit-text-stroke:0.15px #000;transform:scaleX(0.885);transform-origin:0 0;">Data</div>
<div style="position:absolute;left:264.6px;top:87.68px;height:13px;line-height:13px;white-space:nowrap;font:normal 12px 'Liberation Sans', sans-serif;color:#000;letter-spacing:0px;-webkit-text-stroke:0.15px #000;transform:scaleX(0.92);transform-origin:0 0;">1002</div>
<div style="position:absolute;left:315.6px;top:87.68px;height:13px;line-height:13px;white-space:nowrap;font:normal 12px 'Liberation Sans', sans-serif;color:#000;letter-spacing:0px;-webkit-text-stroke:0.15px #000;transform:scaleX(0.885);transform-origin:0 0;">KeyType</div>
<div style="position:absolute;left:489.6px;top:87.68px;height:13px;line-height:13px;white-space:nowrap;font:normal 12px 'Liberation Sans', sans-serif;color:#000;letter-spacing:0px;-webkit-text-stroke:0.15px #000;transform:scaleX(0.885);transform-origin:0 0;">String</div>
<div style="position:absolute;left:559.6px;top:87.68px;height:13px;line-height:13px;white-space:nowrap;font:normal 12px 'Liberation Sans', sans-serif;color:#000;letter-spacing:0px;-webkit-text-stroke:0.15px #000;transform:scaleX(0.885);transform-origin:0 0;">IIsCompressionScheme</div>
<div style="position:absolute;left:264.6px;top:101.68px;height:13px;line-height:13px;white-space:nowrap;font:normal 12px 'Liberation Sans', sans-serif;color:#000;letter-spacing:0px;-webkit-text-stroke:0.15px #000;transform:scaleX(0.92);transform-origin:0 0;">2213</div>
<div style="position:absolute;left:315.6px;top:101.68px;height:13px;line-height:13px;white-space:nowrap;font:normal 12px 'Liberation Sans', sans-serif;color:#000;letter-spacing:0px;-webkit-text-stroke:0.15px #000;transform:scaleX(0.885);transform-origin:0 0;">HcDoDynamicCompression</div>
<div style="position:absolute;left:489.6px;top:101.68px;height:13px;line-height:13px;white-space:nowrap;font:normal 12px 'Liberation Sans', sans-serif;color:#000;letter-spacing:0px;-webkit-text-stroke:0.15px #000;transform:scaleX(0.885);transform-origin:0 0;">DWORD</div>
<div style="position:absolute;left:559.6px;top:101.68px;height:13px;line-height:13px;white-space:nowrap;font:normal 12px 'Liberation Sans', sans-serif;color:#000;letter-spacing:0px;-webkit-text-stroke:0.15px #000;transform:scaleX(0.92);transform-origin:0 0;">1</div>
<div style="position:absolute;left:264.6px;top:115.68px;height:13px;line-height:13px;white-space:nowrap;font:normal 12px 'Liberation Sans', sans-serif;color:#000;letter-spacing:0px;-webkit-text-stroke:0.15px #000;transform:scaleX(0.92);transform-origin:0 0;">2214</div>
<div style="position:absolute;left:315.6px;top:115.68px;height:13px;line-height:13px;white-space:nowrap;font:normal 12px 'Liberation Sans', sans-serif;color:#000;letter-spacing:0px;-webkit-text-stroke:0.15px #000;transform:scaleX(0.885);transform-origin:0 0;">HcDoStaticCompression</div>
<div style="position:absolute;left:489.6px;top:115.68px;height:13px;line-height:13px;white-space:nowrap;font:normal 12px 'Liberation Sans', sans-serif;color:#000;letter-spacing:0px;-webkit-text-stroke:0.15px #000;transform:scaleX(0.885);transform-origin:0 0;">DWORD</div>
<div style="position:absolute;left:559.6px;top:115.68px;height:13px;line-height:13px;white-space:nowrap;font:normal 12px 'Liberation Sans', sans-serif;color:#000;letter-spacing:0px;-webkit-text-stroke:0.15px #000;transform:scaleX(0.92);transform-origin:0 0;">0</div>
<div style="position:absolute;left:264.6px;top:129.68px;height:13px;line-height:13px;white-space:nowrap;font:normal 12px 'Liberation Sans', sans-serif;color:#000;letter-spacing:0px;-webkit-text-stroke:0.15px #000;transform:scaleX(0.92);transform-origin:0 0;">2215</div>
<div style="position:absolute;left:315.6px;top:129.68px;height:13px;line-height:13px;white-space:nowrap;font:normal 12px 'Liberation Sans', sans-serif;color:#000;letter-spacing:0px;-webkit-text-stroke:0.15px #000;transform:scaleX(0.885);transform-origin:0 0;">HcDoOnDemandCompression</div>
<div style="position:absolute;left:489.6px;top:129.68px;height:13px;line-height:13px;white-space:nowrap;font:normal 12px 'Liberation Sans', sans-serif;color:#000;letter-spacing:0px;-webkit-text-stroke:0.15px #000;transform:scaleX(0.885);transform-origin:0 0;">DWORD</div>
<div style="position:absolute;left:559.6px;top:129.68px;height:13px;line-height:13px;white-space:nowrap;font:normal 12px 'Liberation Sans', sans-serif;color:#000;letter-spacing:0px;-webkit-text-stroke:0.15px #000;transform:scaleX(0.92);transform-origin:0 0;">1</div>
<div style="position:absolute;left:264.6px;top:143.68px;height:13px;line-height:13px;white-space:nowrap;font:normal 12px 'Liberation Sans', sans-serif;color:#000;letter-spacing:0px;-webkit-text-stroke:0.15px #000;transform:scaleX(0.92);transform-origin:0 0;">2237</div>
<div style="position:absolute;left:315.6px;top:143.68px;height:13px;line-height:13px;white-space:nowrap;font:normal 12px 'Liberation Sans', sans-serif;color:#000;letter-spacing:0px;-webkit-text-stroke:0.15px #000;transform:scaleX(0.885);transform-origin:0 0;">HcCompressionDll</div>
<div style="position:absolute;left:489.6px;top:143.68px;height:13px;line-height:13px;white-space:nowrap;font:normal 12px 'Liberation Sans', sans-serif;color:#000;letter-spacing:0px;-webkit-text-stroke:0.15px #000;transform:scaleX(0.885);transform-origin:0 0;">StringExp...</div>
<div style="position:absolute;left:559.6px;top:143.68px;height:13px;line-height:13px;white-space:nowrap;font:normal 12px 'Liberation Sans', sans-serif;color:#000;letter-spacing:0px;-webkit-text-stroke:0.15px #000;transform:scaleX(0.885);transform-origin:0 0;">%windir%\system32\inetsrv\gzip.dll</div>
<div style="position:absolute;left:264.6px;top:157.68px;height:13px;line-height:13px;white-space:nowrap;font:normal 12px 'Liberation Sans', sans-serif;color:#000;letter-spacing:0px;-webkit-text-stroke:0.15px #000;transform:scaleX(0.92);transform-origin:0 0;">2238</div>
<div style="position:absolute;left:315.6px;top:157.68px;height:13px;line-height:13px;white-space:nowrap;font:normal 12px 'Liberation Sans', sans-serif;color:#000;letter-spacing:0px;-webkit-text-stroke:0.15px #000;transform:scaleX(0.885);transform-origin:0 0;">HcFileExtensions</div>
<div style="position:absolute;left:489.6px;top:157.68px;height:13px;line-height:13px;white-space:nowrap;font:normal 12px 'Liberation Sans', sans-serif;color:#000;letter-spacing:0px;-webkit-text-stroke:0.15px #000;transform:scaleX(0.885);transform-origin:0 0;">MultiString</div>
<div style="position:absolute;left:559.6px;top:157.68px;height:13px;line-height:13px;white-space:nowrap;font:normal 12px 'Liberation Sans', sans-serif;color:#000;letter-spacing:0px;-webkit-text-stroke:0.15px #000;transform:scaleX(0.885);transform-origin:0 0;">htm,html,txt</div>
<div style="position:absolute;left:264.6px;top:171.68px;height:13px;line-height:13px;white-space:nowrap;font:normal 12px 'Liberation Sans', sans-serif;color:#000;letter-spacing:0px;-webkit-text-stroke:0.15px #000;transform:scaleX(0.92);transform-origin:0 0;">2240</div>
<div style="position:absolute;left:315.6px;top:171.68px;height:13px;line-height:13px;white-space:nowrap;font:normal 12px 'Liberation Sans', sans-serif;color:#000;letter-spacing:0px;-webkit-text-stroke:0.15px #000;transform:scaleX(0.885);transform-origin:0 0;">HcPriority</div>
<div style="position:absolute;left:489.6px;top:171.68px;height:13px;line-height:13px;white-space:nowrap;font:normal 12px 'Liberation Sans', sans-serif;color:#000;letter-spacing:0px;-webkit-text-stroke:0.15px #000;transform:scaleX(0.885);transform-origin:0 0;">DWORD</div>
<div style="position:absolute;left:559.6px;top:171.68px;height:13px;line-height:13px;white-space:nowrap;font:normal 12px 'Liberation Sans', sans-serif;color:#000;letter-spacing:0px;-webkit-text-stroke:0.15px #000;transform:scaleX(0.92);transform-origin:0 0;">1</div>
<div style="position:absolute;left:264.6px;top:185.68px;height:13px;line-height:13px;white-space:nowrap;font:normal 12px 'Liberation Sans', sans-serif;color:#000;letter-spacing:0px;-webkit-text-stroke:0.15px #000;transform:scaleX(0.92);transform-origin:0 0;">2241</div>
<div style="position:absolute;left:315.6px;top:185.68px;height:13px;line-height:13px;white-space:nowrap;font:normal 12px 'Liberation Sans', sans-serif;color:#000;letter-spacing:0px;-webkit-text-stroke:0.15px #000;transform:scaleX(0.885);transform-origin:0 0;">HcDynamicCompressionLevel</div>
<div style="position:absolute;left:489.6px;top:185.68px;height:13px;line-height:13px;white-space:nowrap;font:normal 12px 'Liberation Sans', sans-serif;color:#000;letter-spacing:0px;-webkit-text-stroke:0.15px #000;transform:scaleX(0.885);transform-origin:0 0;">DWORD</div>
<div style="position:absolute;left:559.6px;top:185.68px;height:13px;line-height:13px;white-space:nowrap;font:normal 12px 'Liberation Sans', sans-serif;color:#000;letter-spacing:0px;-webkit-text-stroke:0.15px #000;transform:scaleX(0.92);transform-origin:0 0;">9</div>
<div style="position:absolute;left:264.6px;top:199.68px;height:13px;line-height:13px;white-space:nowrap;font:normal 12px 'Liberation Sans', sans-serif;color:#000;letter-spacing:0px;-webkit-text-stroke:0.15px #000;transform:scaleX(0.92);transform-origin:0 0;">2242</div>
<div style="position:absolute;left:315.6px;top:199.68px;height:13px;line-height:13px;white-space:nowrap;font:normal 12px 'Liberation Sans', sans-serif;color:#000;letter-spacing:0px;-webkit-text-stroke:0.15px #000;transform:scaleX(0.885);transform-origin:0 0;">HcOnDemandCompLevel</div>
<div style="position:absolute;left:489.6px;top:199.68px;height:13px;line-height:13px;white-space:nowrap;font:normal 12px 'Liberation Sans', sans-serif;color:#000;letter-spacing:0px;-webkit-text-stroke:0.15px #000;transform:scaleX(0.885);transform-origin:0 0;">DWORD</div>
<div style="position:absolute;left:559.6px;top:199.68px;height:13px;line-height:13px;white-space:nowrap;font:normal 12px 'Liberation Sans', sans-serif;color:#000;letter-spacing:0px;-webkit-text-stroke:0.15px #000;transform:scaleX(0.92);transform-origin:0 0;">10</div>
<div style="position:absolute;left:264.6px;top:213.68px;height:13px;line-height:13px;white-space:nowrap;font:normal 12px 'Liberation Sans', sans-serif;color:#000;letter-spacing:0px;-webkit-text-stroke:0.15px #000;transform:scaleX(0.92);transform-origin:0 0;">2243</div>
<div style="position:absolute;left:315.6px;top:213.68px;height:13px;line-height:13px;white-space:nowrap;font:normal 12px 'Liberation Sans', sans-serif;color:#000;letter-spacing:0px;-webkit-text-stroke:0.15px #000;transform:scaleX(0.885);transform-origin:0 0;">HcCreateFlags</div>
<div style="position:absolute;left:489.6px;top:213.68px;height:13px;line-height:13px;white-space:nowrap;font:normal 12px 'Liberation Sans', sans-serif;color:#000;letter-spacing:0px;-webkit-text-stroke:0.15px #000;transform:scaleX(0.885);transform-origin:0 0;">DWORD</div>
<div style="position:absolute;left:559.6px;top:213.68px;height:13px;line-height:13px;white-space:nowrap;font:normal 12px 'Liberation Sans', sans-serif;color:#000;letter-spacing:0px;-webkit-text-stroke:0.15px #000;transform:scaleX(0.92);transform-origin:0 0;">0</div>
<div style="position:absolute;left:263px;top:228px;width:631px;height:13px;background:#0A246A;"></div>
<div style="position:absolute;left:264.6px;top:227.68px;height:13px;line-height:13px;white-space:nowrap;font:normal 12px 'Liberation Sans', sans-serif;color:#FFF;letter-spacing:0px;-webkit-text-stroke:0.15px #FFF;transform:scaleX(0.92);transform-origin:0 0;">2244</div>
<div style="position:absolute;left:315.6px;top:227.68px;height:13px;line-height:13px;white-space:nowrap;font:normal 12px 'Liberation Sans', sans-serif;color:#FFF;letter-spacing:0px;-webkit-text-stroke:0.15px #FFF;transform:scaleX(0.885);transform-origin:0 0;">HcScriptFileExtensions</div>
<div style="position:absolute;left:489.6px;top:227.68px;height:13px;line-height:13px;white-space:nowrap;font:normal 12px 'Liberation Sans', sans-serif;color:#FFF;letter-spacing:0px;-webkit-text-stroke:0.15px #FFF;transform:scaleX(0.885);transform-origin:0 0;">MultiString</div>
<div style="position:absolute;left:559.6px;top:227.68px;height:13px;line-height:13px;white-space:nowrap;font:normal 12px 'Liberation Sans', sans-serif;color:#FFF;letter-spacing:0px;-webkit-text-stroke:0.15px #FFF;transform:scaleX(0.885);transform-origin:0 0;">asp,dll,exe,aspx,axd</div>
<div style="position:absolute;left:259px;top:657px;width:635px;height:16px;background:#E8E6E2;"></div>
<div style="position:absolute;left:259px;top:657px;width:16px;height:16px;background:#D7D4CE;"></div>
<div style="position:absolute;left:259px;top:657px;width:15px;height:1px;background:#D7D4CE;"></div>
<div style="position:absolute;left:259px;top:657px;width:1px;height:15px;background:#D7D4CE;"></div>
<div style="position:absolute;left:260px;top:658px;width:13px;height:1px;background:#FFFFFF;"></div>
<div style="position:absolute;left:260px;top:658px;width:1px;height:13px;background:#FFFFFF;"></div>
<div style="position:absolute;left:259px;top:672px;width:16px;height:1px;background:#404040;"></div>
<div style="position:absolute;left:274px;top:657px;width:1px;height:16px;background:#404040;"></div>
<div style="position:absolute;left:260px;top:671px;width:14px;height:1px;background:#808080;"></div>
<div style="position:absolute;left:273px;top:658px;width:1px;height:14px;background:#808080;"></div>
<svg style="position:absolute;left:264px;top:661px" width="5" height="8" viewBox="0 0 5 8"><path d="M4 0 L0 4 L4 8Z" fill="#000"/></svg>
<div style="position:absolute;left:878px;top:657px;width:16px;height:16px;background:#D7D4CE;"></div>
<div style="position:absolute;left:878px;top:657px;width:15px;height:1px;background:#D7D4CE;"></div>
<div style="position:absolute;left:878px;top:657px;width:1px;height:15px;background:#D7D4CE;"></div>
<div style="position:absolute;left:879px;top:658px;width:13px;height:1px;background:#FFFFFF;"></div>
<div style="position:absolute;left:879px;top:658px;width:1px;height:13px;background:#FFFFFF;"></div>
<div style="position:absolute;left:878px;top:672px;width:16px;height:1px;background:#404040;"></div>
<div style="position:absolute;left:893px;top:657px;width:1px;height:16px;background:#404040;"></div>
<div style="position:absolute;left:879px;top:671px;width:14px;height:1px;background:#808080;"></div>
<div style="position:absolute;left:892px;top:658px;width:1px;height:14px;background:#808080;"></div>
<svg style="position:absolute;left:884px;top:661px" width="5" height="8" viewBox="0 0 5 8"><path d="M0 0 L4 4 L0 8Z" fill="#000"/></svg>
<div style="position:absolute;left:275px;top:657px;width:220px;height:16px;background:#D7D4CE;"></div>
<div style="position:absolute;left:275px;top:657px;width:219px;height:1px;background:#D7D4CE;"></div>
<div style="position:absolute;left:275px;top:657px;width:1px;height:15px;background:#D7D4CE;"></div>
<div style="position:absolute;left:276px;top:658px;width:217px;height:1px;background:#FFFFFF;"></div>
<div style="position:absolute;left:276px;top:658px;width:1px;height:13px;background:#FFFFFF;"></div>
<div style="position:absolute;left:275px;top:672px;width:220px;height:1px;background:#404040;"></div>
<div style="position:absolute;left:494px;top:657px;width:1px;height:16px;background:#404040;"></div>
<div style="position:absolute;left:276px;top:671px;width:218px;height:1px;background:#808080;"></div>
<div style="position:absolute;left:493px;top:658px;width:1px;height:14px;background:#808080;"></div>
<div style="position:absolute;left:4px;top:677px;width:677px;height:1px;background:#808080;"></div>
<div style="position:absolute;left:4px;top:677px;width:1px;height:19px;background:#808080;"></div>
<div style="position:absolute;left:4px;top:695px;width:677px;height:1px;background:#FFFFFF;"></div>
<div style="position:absolute;left:680px;top:677px;width:1px;height:19px;background:#FFFFFF;"></div>
<div style="position:absolute;left:682px;top:677px;width:56px;height:1px;background:#808080;"></div>
<div style="position:absolute;left:682px;top:677px;width:1px;height:19px;background:#808080;"></div>
<div style="position:absolute;left:682px;top:695px;width:56px;height:1px;background:#FFFFFF;"></div>
<div style="position:absolute;left:737px;top:677px;width:1px;height:19px;background:#FFFFFF;"></div>
<div style="position:absolute;left:739px;top:677px;width:157px;height:1px;background:#808080;"></div>
<div style="position:absolute;left:739px;top:677px;width:1px;height:19px;background:#808080;"></div>
<div style="position:absolute;left:739px;top:695px;width:157px;height:1px;background:#FFFFFF;"></div>
<div style="position:absolute;left:895px;top:677px;width:1px;height:19px;background:#FFFFFF;"></div>
<div style="position:absolute;left:7px;top:678.68px;height:13px;line-height:13px;white-space:nowrap;font:normal 12px 'Liberation Sans', sans-serif;color:#000;letter-spacing:0px;-webkit-text-stroke:0.15px #000;transform:scaleX(0.92);transform-origin:0 0;">/LM/W3SVC/Filters/Compression/deflate/</div>
<div style="position:absolute;left:691px;top:678.68px;height:13px;line-height:13px;white-space:nowrap;font:normal 12px 'Liberation Sans', sans-serif;color:#000;letter-spacing:0px;-webkit-text-stroke:0.15px #000;transform:scaleX(0.885);transform-origin:0 0;">11 items</div>
<svg style="position:absolute;left:749px;top:678px" width="16" height="17" viewBox="0 0 16 17"><defs><linearGradient id="sg749_678" x1="0" x2="1"><stop offset="0" stop-color="#A8B0BA"/><stop offset="0.35" stop-color="#D4D8DE"/><stop offset="0.7" stop-color="#A8B0BA"/><stop offset="1" stop-color="#747E8E"/></linearGradient></defs>
<path d="M2.5 4 Q2.5 1.5 8 1.5 Q13.5 1.5 13.5 4 L13.5 13.5 Q13.5 15.8 8 15.8 Q2.5 15.8 2.5 13.5Z" fill="url(#sg749_678)" stroke="#8C98A8" stroke-width="0.8"/>
<path d="M3.5 3.6 Q4 2.2 8 2.2 Q12.5 2.2 12.8 3.6 Q8 5 3.5 3.6Z" fill="#F2E6F2"/>
<path d="M4.5 5 L4.5 14 M7 5.2 L7 14.8" stroke="#B4CCE6" stroke-width="0.8"/>
<path d="M12 5.5 L12 6.5 M12 8.5 L12 9.5 M12 11.5 L12 12.5" stroke="#4A7CC4" stroke-width="1"/>
<path d="M10 14.5 Q12.5 14.5 13.2 13" stroke="#505868" stroke-width="1.2" fill="none"/></svg>
<div style="position:absolute;left:769px;top:678.68px;height:13px;line-height:13px;white-space:nowrap;font:normal 12px 'Liberation Sans', sans-serif;color:#000;letter-spacing:0px;-webkit-text-stroke:0.15px #000;transform:scaleX(0.9);transform-origin:0 0;">BPLWEBPRD01 ( local )</div>
</div></body></html>
